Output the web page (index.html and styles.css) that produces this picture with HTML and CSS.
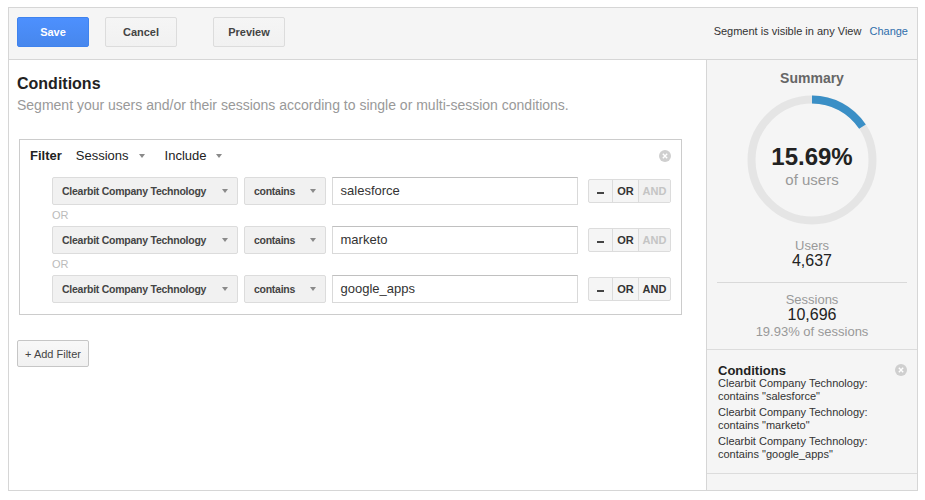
FILE: index.html
```html
<!DOCTYPE html>
<html>
<head>
<meta charset="utf-8">
<link rel="stylesheet" href="styles.css">
</head>
<body>
<div class="page">
  <div class="toolbar">
    <button class="btn btn-primary">Save</button>
    <button class="btn btn-cancel">Cancel</button>
    <button class="btn btn-preview">Preview</button>
    <div class="visibility">Segment is visible in any View <a class="change">Change</a></div>
  </div>
  <div class="main">
    <div class="editor">
      <h1 class="title">Conditions</h1>
      <p class="subtitle">Segment your users and/or their sessions according to single or multi-session conditions.</p>
      <div class="filter">
        <div class="filter-head">
          <span class="filter-label">Filter</span>
          <span class="menu">Sessions <i class="caret"></i></span>
          <span class="menu">Include <i class="caret"></i></span>
          <svg class="close" width="12" height="12" viewBox="0 0 12 12"><circle cx="6" cy="6" r="6" fill="#cfcfcf"/><path d="M3.8 3.8L8.2 8.2M8.2 3.8L3.8 8.2" stroke="#fff" stroke-width="1.4"/></svg>
        </div>
        <div class="rows">
          <div class="row">
            <div class="select dim">Clearbit Company Technology <i class="caret"></i></div>
            <div class="select op">contains <i class="caret"></i></div>
            <div class="input">salesforce</div>
            <div class="seg"><span class="s minus"><i class="bar"></i></span><span class="s or">OR</span><span class="s and off">AND</span></div>
          </div>
          <div class="or-label">OR</div>
          <div class="row">
            <div class="select dim">Clearbit Company Technology <i class="caret"></i></div>
            <div class="select op">contains <i class="caret"></i></div>
            <div class="input">marketo</div>
            <div class="seg"><span class="s minus"><i class="bar"></i></span><span class="s or">OR</span><span class="s and off">AND</span></div>
          </div>
          <div class="or-label">OR</div>
          <div class="row">
            <div class="select dim">Clearbit Company Technology <i class="caret"></i></div>
            <div class="select op">contains <i class="caret"></i></div>
            <div class="input">google_apps</div>
            <div class="seg"><span class="s minus"><i class="bar"></i></span><span class="s or">OR</span><span class="s and">AND</span></div>
          </div>
        </div>
      </div>
      <button class="add-filter">+ Add Filter</button>
    </div>
    <div class="side">
      <div class="summary">
        <div class="summary-title">Summary</div>
        <div class="donut">
          <svg class="ring" width="130" height="130" viewBox="0 0 130 130">
            <circle cx="65" cy="65" r="60.5" fill="none" stroke="#e5e5e5" stroke-width="8"/>
            <circle cx="65" cy="65" r="60.5" fill="none" stroke="#3a8fc6" stroke-width="8" stroke-dasharray="59.6 400" transform="rotate(-90 65 65)"/>
          </svg>
          <div class="donut-text">
            <div class="pct">15.69%</div>
            <div class="pct-label">of users</div>
          </div>
        </div>
        <div class="stat">
          <div class="stat-label">Users</div>
          <div class="stat-value">4,637</div>
        </div>
        <div class="divider"></div>
        <div class="stat stat-sessions">
          <div class="stat-label">Sessions</div>
          <div class="stat-value">10,696</div>
          <div class="stat-sub">19.93% of sessions</div>
        </div>
      </div>
      <div class="cond">
        <div class="cond-head">
          <span class="cond-title">Conditions</span>
          <svg class="close" width="12" height="12" viewBox="0 0 12 12"><circle cx="6" cy="6" r="6" fill="#cfcfcf"/><path d="M3.8 3.8L8.2 8.2M8.2 3.8L3.8 8.2" stroke="#fff" stroke-width="1.4"/></svg>
        </div>
        <div class="cond-item">Clearbit Company Technology:<br>contains "salesforce"</div>
        <div class="cond-item">Clearbit Company Technology:<br>contains "marketo"</div>
        <div class="cond-item">Clearbit Company Technology:<br>contains "google_apps"</div>
      </div>
    </div>
  </div>
</div>
</body>
</html>
```
FILE: styles.css
```css
* { box-sizing: border-box; }
html, body { margin: 0; padding: 0; background: #fff; }
body { font-family: "Liberation Sans", Arial, sans-serif; color: #333; }

.page {
  margin: 7px 0 0 8px;
  width: 910px;
  height: 484px;
  border: 1px solid #d6d6d6;
  display: flex;
  flex-direction: column;
}

.toolbar {
  height: 52px;
  flex: none;
  background: #f5f5f5;
  border-bottom: 1px solid #d6d6d6;
  padding: 9px 9px 0 8px;
  display: flex;
  align-items: flex-start;
}
.btn {
  height: 30px;
  width: 72px;
  font-family: inherit;
  font-size: 11px;
  font-weight: bold;
  border-radius: 2px;
  padding: 0;
  cursor: pointer;
}
.btn-primary {
  background: linear-gradient(#4d90fe, #4787ed);
  border: 1px solid #3f83ee;
  color: #fff;
}
.btn-cancel, .btn-preview {
  background: linear-gradient(#f5f5f5, #f1f1f1);
  border: 1px solid #dcdcdc;
  color: #444;
}
.btn-cancel { margin-left: 16px; }
.btn-preview { margin-left: 36px; }
.visibility {
  margin-left: auto;
  font-size: 11px;
  line-height: 28px;
  color: #333;
}
.change { color: #2f6eab; margin-left: 5px; }

.main { flex: 1; display: flex; min-height: 0; }
.editor { flex: 1; background: #fff; padding: 14px 8px 0 8px; }
.title {
  margin: 0;
  font-size: 16px;
  line-height: 20px;
  font-weight: bold;
  color: #222;
}
.subtitle {
  margin: 2px 0 0;
  font-size: 14px;
  line-height: 18px;
  color: #999;
}

.filter {
  margin: 25px 0 0 2px;
  width: 663px;
  border: 1px solid #cccccc;
  padding: 0 10px 11px 10px;
}
.filter-head {
  height: 31px;
  display: flex;
  align-items: center;
  font-size: 13px;
  color: #222;
}
.filter-label { font-weight: bold; margin-right: 14px; }
.menu { margin-right: 20px; display: inline-flex; align-items: center; }
.menu .caret { margin-left: 10px; }
.filter-head .close { margin-left: auto; }

.caret {
  display: inline-block;
  width: 0;
  height: 0;
  border-left: 3.5px solid transparent;
  border-right: 3.5px solid transparent;
  border-top: 4px solid #8a8a8a;
}

.rows { margin: 6px 0 0 22px; }
.row { display: flex; align-items: center; height: 28px; }
.or-label {
  height: 21px;
  line-height: 20px;
  font-size: 11px;
  color: #bbb;
}
.select {
  height: 28px;
  background: #f1f1f1;
  border: 1px solid #dcdcdc;
  border-radius: 2px;
  font-size: 10.5px;
  letter-spacing: -0.25px;
  font-weight: bold;
  color: #444;
  display: flex;
  align-items: center;
  justify-content: space-between;
  padding: 0 9px 0 9px;
}
.select.dim { width: 187px; }
.select.op { width: 82px; margin-left: 6px; }
.input {
  width: 248px;
  height: 28px;
  margin-left: 6px;
  border: 1px solid #d9d9d9;
  border-top-color: #c0c0c0;
  background: #fff;
  font-size: 13px;
  line-height: 26px;
  padding-left: 8px;
  color: #333;
}
.seg {
  margin-left: 10px;
  display: flex;
  height: 24px;
  border: 1px solid #dcdcdc;
  border-radius: 2px;
  background: #f5f5f5;
}
.s {
  font-size: 11px;
  font-weight: bold;
  color: #333;
  line-height: 22px;
  text-align: center;
}
.s + .s { border-left: 1px solid #dcdcdc; }
.minus { width: 23px; display: flex; align-items: center; justify-content: center; }
.bar { display: block; width: 7px; height: 2px; background: #444; margin-top: 3px; }
.or { width: 26px; }
.and { width: 32px; }
.and.off { color: #c4c4c4; background: #f1f1f1; }

.add-filter {
  margin-top: 25px;
  width: 72px;
  height: 27px;
  font-family: inherit;
  font-size: 11px;
  color: #444;
  background: linear-gradient(#f8f8f8, #f1f1f1);
  border: 1px solid #c6c6c6;
  border-radius: 2px;
  padding: 0;
}

.side {
  width: 211px;
  flex: none;
  background: #f5f5f5;
  border-left: 1px solid #d6d6d6;
  display: flex;
  flex-direction: column;
}
.summary {
  padding: 9px 0 10px;
  border-bottom: 1px solid #dcdcdc;
  text-align: center;
}
.summary-title {
  font-size: 14px;
  font-weight: bold;
  line-height: 18px;
  color: #666;
}
.donut {
  margin: 8px auto 0;
  width: 130px;
  height: 130px;
  display: grid;
}
.ring, .donut-text { grid-area: 1 / 1; }
.donut-text { padding-top: 48px; }
.pct {
  font-size: 24px;
  font-weight: bold;
  line-height: 28px;
  color: #222;
}
.pct-label {
  font-size: 15px;
  line-height: 18px;
  color: #999;
}
.stat { margin-top: 14px; }
.stat-label { font-size: 13px; line-height: 14px; color: #999; }
.stat-value { font-size: 16px; line-height: 16px; color: #222; }
.stat-sub { font-size: 13px; line-height: 14px; color: #999; margin-top: 2px; }
.divider { margin: 13px 10px 0; border-top: 1px solid #d9d9d9; }
.stat-sessions { margin-top: 10px; }

.cond {
  padding: 13px 10px 12px 11px;
  border-bottom: 1px solid #dcdcdc;
}
.cond-head { display: flex; align-items: center; justify-content: space-between; height: 14px; }
.cond-title { font-size: 13px; font-weight: bold; color: #222; }
.cond-item {
  font-size: 11px;
  line-height: 13px;
  color: #333;
}
.cond-item + .cond-item { margin-top: 3px; }
```
